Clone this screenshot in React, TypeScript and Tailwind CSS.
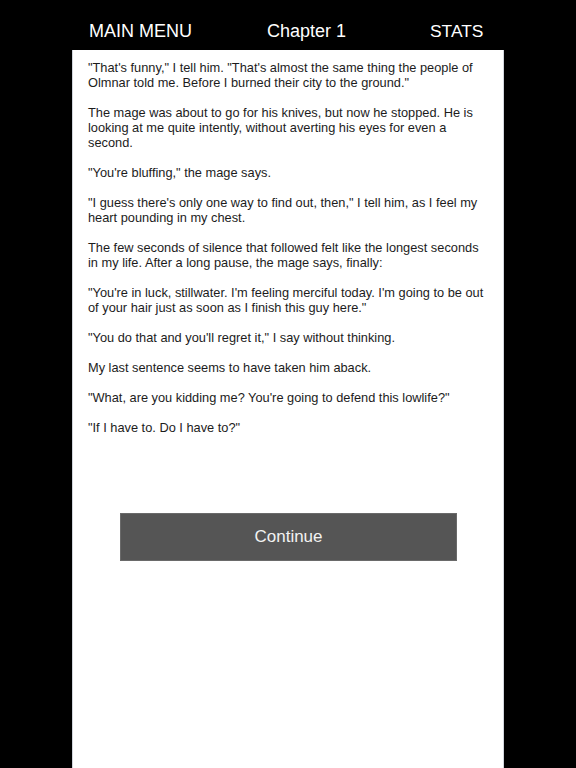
import React from "react";

const paragraphs = [
  "\"That's funny,\" I tell him. \"That's almost the same thing the people of Olmnar told me. Before I burned their city to the ground.\"",
  "The mage was about to go for his knives, but now he stopped. He is looking at me quite intently, without averting his eyes for even a second.",
  "\"You're bluffing,\" the mage says.",
  "\"I guess there's only one way to find out, then,\" I tell him, as I feel my heart pounding in my chest.",
  "The few seconds of silence that followed felt like the longest seconds in my life. After a long pause, the mage says, finally:",
  "\"You're in luck, stillwater. I'm feeling merciful today. I'm going to be out of your hair just as soon as I finish this guy here.\"",
  "\"You do that and you'll regret it,\" I say without thinking.",
  "My last sentence seems to have taken him aback.",
  "\"What, are you kidding me? You're going to defend this lowlife?\"",
  "\"If I have to. Do I have to?\"",
];

export default function App() {
  return (
    <div
      className="w-[576px] h-[768px] bg-black flex flex-col overflow-hidden"
      style={{ fontFamily: '"Liberation Sans", Arial, sans-serif' }}
    >
      <header className="h-[50px] shrink-0 flex items-center text-white pt-[12px] leading-none">
        <div className="flex items-baseline text-[18px]">
          <span className="ml-[89px] w-[104px] whitespace-nowrap">MAIN MENU</span>
          <span className="ml-[74px] w-[80px] whitespace-nowrap">Chapter 1</span>
          <span className="ml-[83px] text-[17.4px] whitespace-nowrap">STATS</span>
        </div>
      </header>
      <main className="mx-[72px] flex-1 bg-white border-x border-gray-300 pl-[15px] pr-[12px] pt-[10px]">
        <div className="flex flex-col gap-[15px] text-[12.8px] leading-[15px] text-[#1c1c1c]">
          {paragraphs.map((p, i) => (
            <p key={i}>{p}</p>
          ))}
        </div>
        <div className="mt-[78px] flex justify-center">
          <button className="-ml-[2px] w-[337px] h-[48px] bg-[#555555] border border-[#6a6a6a] text-[#f2f2f2] text-[17px] flex items-center justify-center">
            Continue
          </button>
        </div>
      </main>
    </div>
  );
}
